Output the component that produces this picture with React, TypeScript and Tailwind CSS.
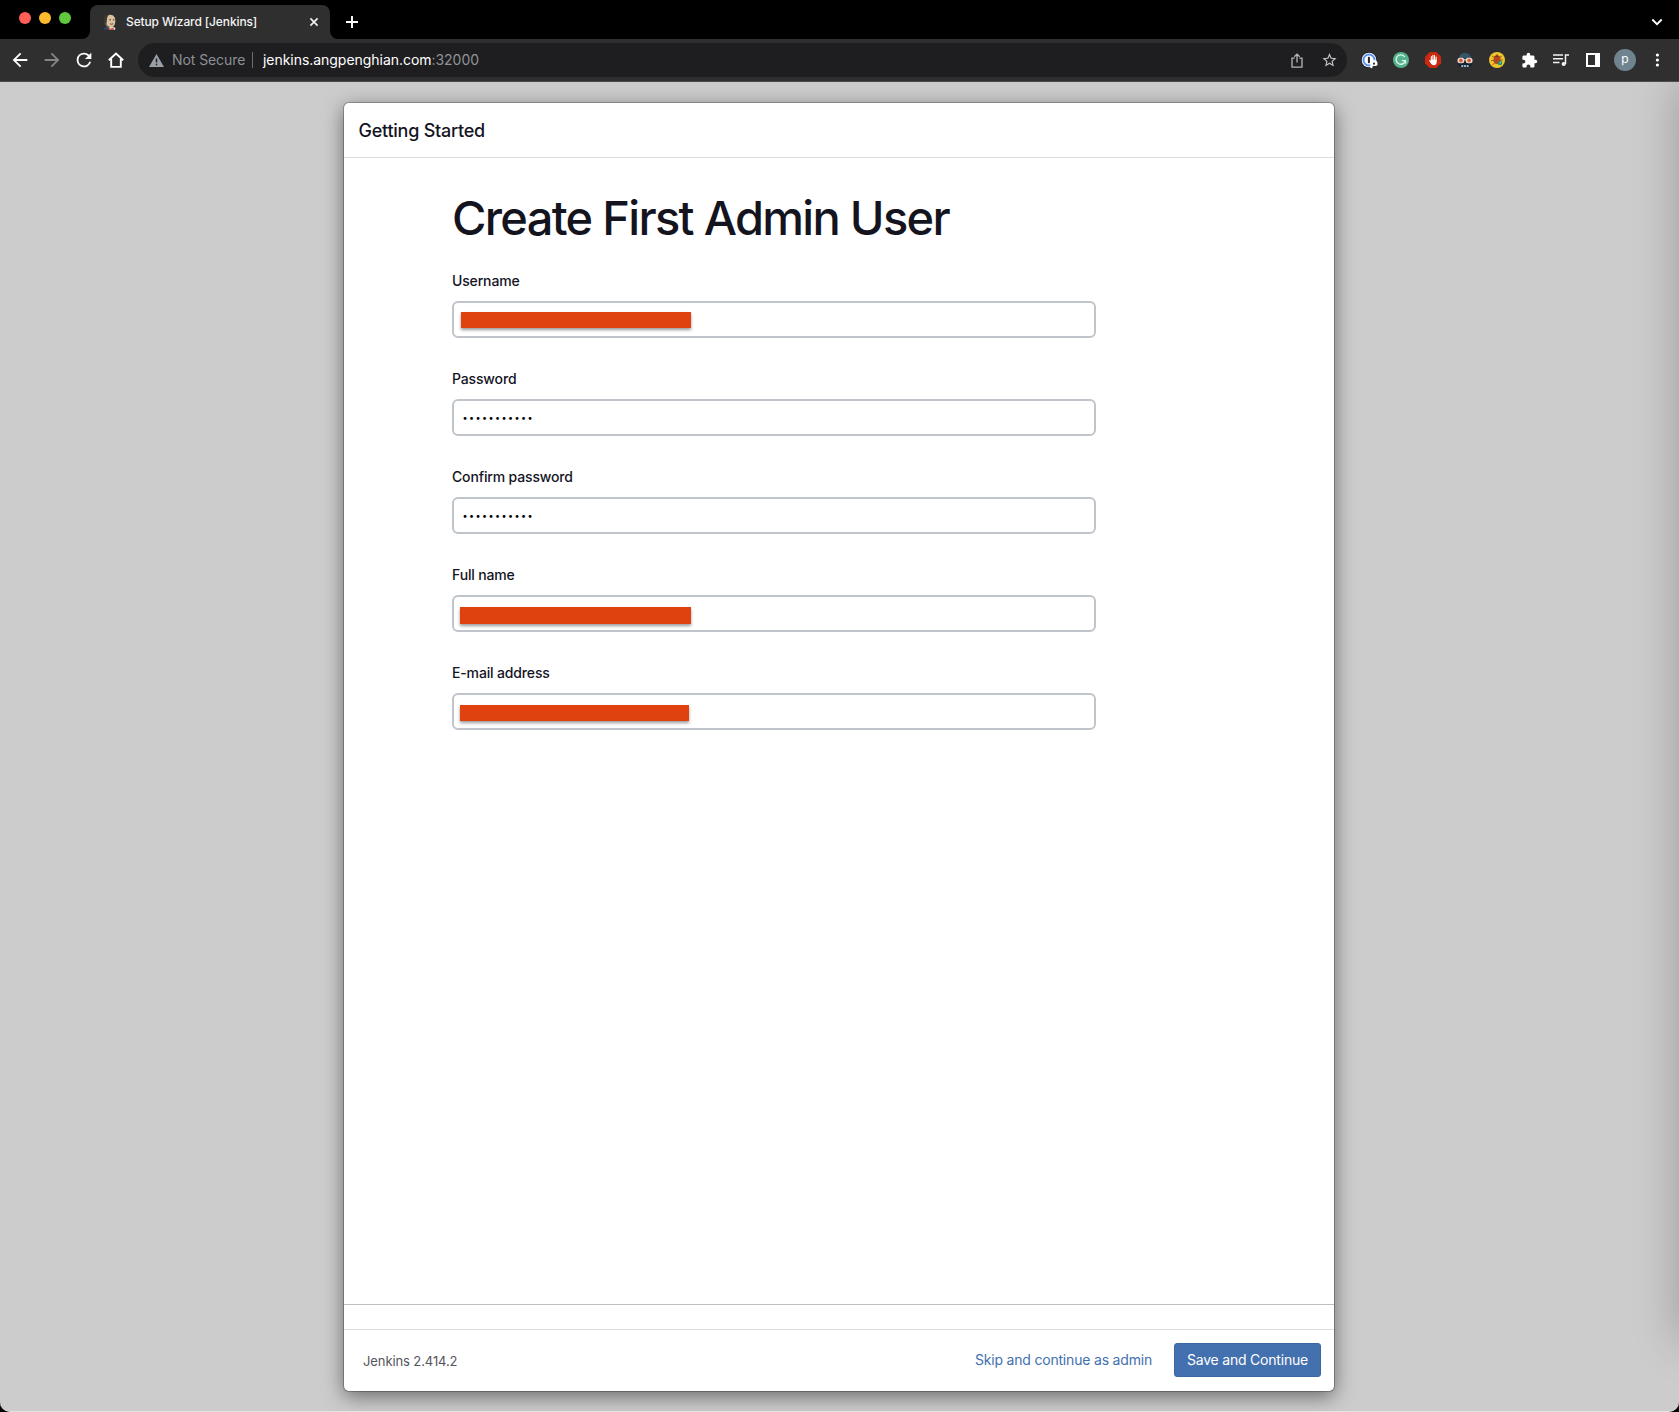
import React from "react";

function Svg({ size, children, color = "#fff", vb = "0 0 24 24" }: { size: number; children: React.ReactNode; color?: string; vb?: string }) {
  return (
    <svg width={size} height={size} viewBox={vb} fill={color} className="block shrink-0">
      {children}
    </svg>
  );
}

function Slot({ children }: { children: React.ReactNode }) {
  return <div className="flex h-6 w-8 shrink-0 items-center justify-center">{children}</div>;
}

function JenkinsFavicon() {
  return (
    <svg width="16" height="16" viewBox="0 0 16 16" className="block shrink-0">
      <path d="M1.2 15.8 2 13.9l3-1h5.500l3.200 1 .8 1.900z" fill="#2d4a63" />
      <path d="M7 12.500l3 .3 3.300 1-.3 2H7.500z" fill="#e8e4dc" />
      <path d="M6 14l2.500.8L11 13.700l1.200 2H7z" fill="#d03a32" />
      <path d="M3 8.500C2.300 3.500 4.300.8 8 .8s5.600 2.800 5.300 6.700c-.2 3.500-1.800 6-4.500 6C6 13.500 4 12 3 8.500z" fill="#dcc3a0" />
      <path d="M2.600 10.500C.6 6 1.600 1.800 4.800 .7L8 .3C5.500 1.500 5.200 3.500 5 5L4.500 9.500z" fill="#3d3934" />
      <path d="M4 8.500c-.2 2.500 1.400 4.200 3.500 4.800" stroke="#7a6552" strokeWidth="1.200" fill="none" />
      <path d="M7.300 5.800h1.700M10.800 5.800h1.600" stroke="#4a382c" strokeWidth="1" />
      <path d="M8 9.800q1.800 1 3.300-.1" stroke="#6b4838" strokeWidth="1" fill="none" />
    </svg>
  );
}

function TabStrip() {
  return (
    <div className="flex h-[39px] bg-black">
      <div className="flex h-9 w-[82px] items-center gap-2 pl-[19px]">
        <span className="size-3 shrink-0 rounded-full bg-[#ff5f57]" />
        <span className="size-3 shrink-0 rounded-full bg-[#febb2e]" />
        <span className="size-3 shrink-0 rounded-full bg-[#60c83e]" />
      </div>
      <svg width="8" height="8" className="block shrink-0 self-end" viewBox="0 0 8 8">
        <path d="M8 0v8H0a8 8 0 0 0 8-8z" fill="#2f2f2f" />
      </svg>
      <div className="mt-[5px] flex w-[240px] items-center rounded-t-lg bg-[#2f2f2f] pl-3">
        <JenkinsFavicon />
        <span className="ml-2 w-[180px] text-xs font-medium tracking-[-0.12px] whitespace-nowrap text-[#f4f4f4]">Setup Wizard [Jenkins]</span>
        <svg width="16" height="16" viewBox="0 0 16 16" className="block shrink-0" stroke="#eee" strokeWidth="1.700">
          <path d="M4.400 4.400l7.200 7.200M11.600 4.400l-7.200 7.200" />
        </svg>
      </div>
      <svg width="8" height="8" className="block shrink-0 self-end" viewBox="0 0 8 8">
        <path d="M0 0v8h8a8 8 0 0 1-8-8z" fill="#2f2f2f" />
      </svg>
      <svg width="12" height="12" viewBox="0 0 12 12" className="mt-4 ml-2 block shrink-0" stroke="#fff" strokeWidth="1.900">
        <path d="M6 0v12M0 6h12" />
      </svg>
      <svg width="12" height="12" viewBox="0 0 12 12" className="mt-4 mr-4 ml-auto block shrink-0" fill="none" stroke="#fff" strokeWidth="1.800">
        <path d="M1.300 3.500 6 8.200l4.700-4.700" />
      </svg>
    </div>
  );
}

function Extensions() {
  return (
    <>
      <Slot>
        <svg width="16" height="16" viewBox="0 0 16 16" className="block overflow-visible">
          <circle cx="8" cy="8" r="7.900" fill="#16191f" />
          <circle cx="8" cy="8" r="7.300" fill="#fff" />
          <circle cx="8" cy="8" r="5.500" fill="#fff" stroke="#5a92f0" strokeWidth="2" />
          <rect x="6.900" y="4.800" width="2" height="6.400" rx=".8" fill="#20242b" />
          <path d="M9.300 16v-4.500a3.600 3.600 0 0 1 7.200 0V13l-1.600 1-3-.2-.8 2.400z" fill="#fff" />
          <path d="M12 12.500v-1a1 1 0 0 1 2 0v1z" fill="#20242b" />
        </svg>
      </Slot>
      <Slot>
        <svg width="16" height="16" viewBox="0 0 16 16" className="block">
          <circle cx="8" cy="8" r="8" fill="#54b28c" />
          <path d="M11.700 4.900A4.700 4.700 0 1 0 12.400 8.600H9M12.500 8.500v3" fill="none" stroke="#e8f8f0" strokeWidth="1.300" />
        </svg>
      </Slot>
      <Slot>
        <svg width="16" height="16" viewBox="0 0 16 16" className="block">
          <path d="M4.700 0h6.600L16 4.700v6.600L11.300 16H4.700L0 11.300V4.700z" fill="#c8290f" />
          <path d="M6.300 9.200V4.500M7.900 8V3.200M9.500 8V3.500M11.100 9V5M4.700 8.600l1.800 2.400" stroke="#fff" strokeWidth="1.100" strokeLinecap="round" />
          <path d="M5.800 7.800h5.800v2.500c0 2-1 3-2.700 3-1.700 0-2.600-1.300-3.500-3z" fill="#fff" />
        </svg>
      </Slot>
      <Slot>
        <svg width="16" height="16" viewBox="0 0 16 16" className="block">
          <path d="M2 7C2 3 4.500 1 8 1s6 2 6 6l1 1v4H1V8z" fill="#355569" />
          <path d="M1.500 6.500h13l.5 5.500-1.500 3h-11L1 12z" fill="#16222c" />
          <rect x=".5" y="5.700" width="6.800" height="5.600" rx="2.500" fill="#f3ddd0" />
          <rect x="8.700" y="5.700" width="6.800" height="5.600" rx="2.500" fill="#f3ddd0" />
          <path d="M7 7.800h2" stroke="#f3ddd0" />
          <circle cx="3.900" cy="8.500" r="1.900" fill="#cf5f3a" />
          <circle cx="12.100" cy="8.500" r="1.900" fill="#cf5f3a" />
          <path d="M4 15l.6-2h6.800l.6 2z" fill="#91b7c8" />
          <path d="M6.500 13v2M9.500 13v2" stroke="#16222c" strokeWidth=".7" />
        </svg>
      </Slot>
      <Slot>
        <svg width="16" height="16" viewBox="0 0 16 16" className="block">
          <circle cx="8" cy="8" r="8" fill="#efc52d" />
          <path d="M3 4l3 2M2 8.500h3M3.500 13 6 10.500M13 4l-3 2M8 2v3M11 8h3" stroke="#8b5a1e" strokeWidth=".9" />
          <ellipse cx="8" cy="7.700" rx="3.600" ry="4.400" fill="#b8451f" />
          <path d="M5.500 4.800 8 3.200l2.500 1.600z" fill="#6b3a1c" />
          <circle cx="11" cy="11" r="2.300" fill="#1f8f74" />
          <circle cx="11.200" cy="10.800" r=".8" fill="#9fd6a8" />
        </svg>
      </Slot>
      <Slot>
        <Svg size={17}>
          <path d="M20.500 11H19V7c0-1.100-.9-2-2-2h-4V3.500a2.500 2.500 0 0 0-5 0V5H4c-1.100 0-1.990.9-1.990 2v3.800H3.500c1.490 0 2.700 1.210 2.700 2.700s-1.210 2.700-2.700 2.700H2V20c0 1.100.9 2 2 2h3.800v-1.500c0-1.490 1.210-2.700 2.700-2.700s2.700 1.210 2.700 2.700V22H17c1.100 0 2-.9 2-2v-4h1.500a2.500 2.500 0 0 0 0-5z" />
        </Svg>
      </Slot>
      <Slot>
        <svg width="16" height="14" viewBox="0 0 16 14" className="block" fill="none" stroke="#f2f2f2" strokeWidth="1.500">
          <path d="M0 2h10M0 5.700h10M0 9.400h6.500M12.500 11V2H16" />
          <circle cx="10.700" cy="11" r="2.100" fill="#f2f2f2" stroke="none" />
        </svg>
      </Slot>
      <Slot>
        <svg width="14" height="14" viewBox="0 0 14 14" className="block">
          <path fillRule="evenodd" d="M0 0h14v14H0zM2 2v10h7V2z" fill="#fff" />
        </svg>
      </Slot>
      <Slot>
        <div className="flex size-[22px] shrink-0 items-center justify-center rounded-full bg-[#708490] pb-[2px] text-xs leading-none text-white">p</div>
      </Slot>
      <Slot>
        <svg width="4" height="14" viewBox="0 0 4 14" className="block" fill="#fff">
          <circle cx="2.400" cy="2" r="1.600" />
          <circle cx="2.400" cy="7" r="1.600" />
          <circle cx="2.400" cy="12" r="1.600" />
        </svg>
      </Slot>
    </>
  );
}

function Toolbar() {
  return (
    <div className="flex h-[43px] items-center border-b border-[#4c4c4c] bg-[#2f2f2f] pl-1">
      <Slot>
        <Svg size={22}><path d="M20 11H7.830l5.590-5.590L12 4l-8 8 8 8 1.410-1.410L7.830 13H20z" /></Svg>
      </Slot>
      <Slot>
        <Svg size={22} color="#858585"><path d="M12 4l-1.410 1.410L16.170 11H4v2h12.170l-5.580 5.590L12 20l8-8z" /></Svg>
      </Slot>
      <Slot>
        <Svg size={22}><path d="M17.650 6.350A7.958 7.958 0 0 0 12 4a8 8 0 1 0 7.730 10h-2.080A6 6 0 1 1 12 6c1.660 0 3.140.69 4.220 1.780L13 11h7V4z" /></Svg>
      </Slot>
      <Slot>
        <svg width="16" height="16" viewBox="0 0 16 16" className="block" fill="none" stroke="#fff" strokeWidth="1.900">
          <path d="M.8 8.300 8 1.600l7.200 6.700M3.200 7v7.900h9.600V7" />
        </svg>
      </Slot>
      <div className="ml-[6px] flex h-[34px] w-[1209px] shrink-0 items-center rounded-full bg-[#1e1e20] text-sm whitespace-nowrap">
        <svg width="15" height="13" viewBox="0 0 15 13" className="ml-[11px] block shrink-0">
          <path d="M7.500 0 15 13H0z" fill="#9aa0a6" />
          <path d="M7.500 4.500v4M7.500 9.700v1.600" stroke="#1e1e20" strokeWidth="1.500" />
        </svg>
        <span className="ml-2 w-[80px] tracking-[-0.08px] text-[#8b9095]">Not Secure</span>
        <span className="h-4 w-px bg-[#6a6d70]" />
        <span className="ml-[10px] tracking-[-0.04px] text-[#909396]">
          <span className="text-white">jenkins.angpenghian.com</span>:32000
        </span>
        <div className="mr-[2px] ml-auto flex">
          <Slot>
            <svg width="12" height="15" viewBox="0 0 12 15" className="block" fill="none" stroke="#b4b6b9" strokeWidth="1.300">
              <path d="M3.600 5.200H1v9h10v-9H8.400M6 9.500V1.300M3.300 3.800 6 1.100l2.700 2.700" />
            </svg>
          </Slot>
          <Slot>
            <Svg size={17} color="#c3c5c8" vb="0 0.500 24 24"><path d="M22 9.240l-7.190-.62L12 2 9.190 8.630 2 9.240l5.460 4.730L5.820 21 12 17.270 18.180 21l-1.630-7.030L22 9.240zM12 15.400l-3.760 2.270 1-4.280-3.320-2.880 4.380-.38L12 6.100l1.710 4.040 4.380.38-3.320 2.880 1 4.280L12 15.400z" /></Svg>
          </Slot>
        </div>
      </div>
      <div className="ml-[6px] flex">
        <Extensions />
      </div>
    </div>
  );
}

function Redaction({ className }: { className: string }) {
  return <div className={`bg-[#df410f] shadow-[0_2px_3px_rgba(0,0,0,0.4)] ${className}`} />;
}

function Field({ label, children }: { label: string; children: React.ReactNode }) {
  return (
    <div className="h-[98px]">
      <div className="h-[30px] text-sm leading-5 font-medium tracking-[-0.15px]">{label}</div>
      <div className="h-[37px] w-[644px] rounded-[6px] border-2 border-[#bfc5cb] bg-white">{children}</div>
    </div>
  );
}

function Dots() {
  return <div className="pl-[8.500px] text-[9px] leading-[33px] tracking-[1.450px] text-black">•••••••••••</div>;
}

export default function App() {
  return (
    <div className="h-[1412px] w-[1679px] overflow-hidden bg-black font-['Inter',sans-serif] text-[#14141f]">
      <TabStrip />
      <Toolbar />
      <div className="relative flex h-[1330px] justify-center overflow-hidden rounded-b-[10px] border-b border-[#e2e2e2] bg-[#cccccc] pt-[21px]">
        <div className="absolute top-0 -right-[40px] h-[1258px] w-[40px] shadow-[0_0_45px_rgba(0,0,0,0.25)]" />
        <main className="relative right-[0.5px] flex h-[1288px] w-[990px] flex-col rounded-[5px] bg-white shadow-[0_0_0_1px_rgba(0,0,0,0.25),0_5px_20px_rgba(0,0,0,0.5)]">
          <header className="h-[55px] border-b border-[#dcdcdc] pt-[14px] pl-[14.500px] text-lg leading-7 font-medium tracking-[-0.24px]">
            Getting Started
          </header>
          <section className="flex-1 pl-[108px]">
            <h1 className="h-[113px] pt-[31px] text-[47px] leading-[58px] font-medium tracking-[-1.700px]">Create First Admin User</h1>
            <Field label="Username">
              <Redaction className="mt-[9px] ml-[7px] h-4 w-[230px]" />
            </Field>
            <Field label="Password"><Dots /></Field>
            <Field label="Confirm password"><Dots /></Field>
            <Field label="Full name">
              <Redaction className="mt-[10px] ml-[6px] h-[17px] w-[231px]" />
            </Field>
            <Field label="E-mail address">
              <Redaction className="mt-[10px] ml-[6px] h-4 w-[229px]" />
            </Field>
          </section>
          <div className="h-[25px] border-t border-[#bdbdbd]" />
          <footer className="flex h-[62px] items-start border-t border-[#dddddd] pt-[13px] pr-[13px] pl-[19px]">
            <span className="mt-[8px] text-[13px] leading-5 tracking-[-0.1px] text-[#55555c]">Jenkins 2.414.2</span>
            <button className="mt-[7px] mr-[22px] ml-auto text-sm leading-5 tracking-[-0.19px] text-[#4370ae]">Skip and continue as admin</button>
            <button className="h-[34px] w-[147px] rounded-[3px] border border-[#3a66a3] bg-[#4370ae] text-sm tracking-[-0.21px] text-white">Save and Continue</button>
          </footer>
        </main>
      </div>
    </div>
  );
}
